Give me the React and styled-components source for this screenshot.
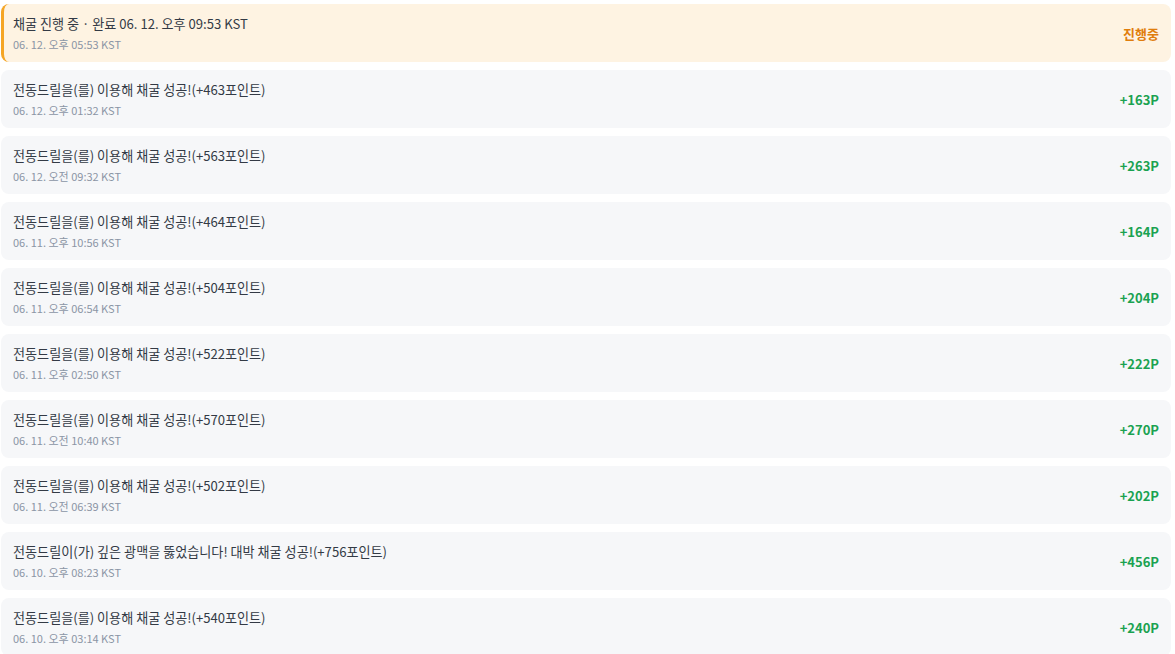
import React from "react";
import styled, { createGlobalStyle } from "styled-components";

const GlobalStyle = createGlobalStyle`
  html, body {
    margin: 0;
    padding: 0;
    background: #ffffff;
    font-family: "Noto Sans CJK KR", "Noto Sans", sans-serif;
  }
`;

const List = styled.div`
  display: flex;
  flex-direction: column;
  gap: 8px;
  padding: 4px 4px 0 1px;
`;

const Item = styled.div`
  display: flex;
  align-items: center;
  justify-content: space-between;
  height: 58px;
  box-sizing: border-box;
  padding: 0 12px 0 ${(p) => (p.$active ? "9px" : "12px")};
  border-radius: 8px;
  background: ${(p) => (p.$active ? "#fef3e2" : "#f6f7f9")};
  border-left: ${(p) => (p.$active ? "3px solid #f5a524" : "none")};
`;

const Info = styled.div`
  display: flex;
  flex-direction: column;
  gap: 4px;
`;

const Title = styled.div`
  font-size: 13.1px;
  color: #333a45;
  line-height: 18px;
`;

const Time = styled.div`
  font-size: 11px;
  color: #8b95a5;
  line-height: 14px;
`;

const Amount = styled.div`
  font-size: 13px;
  font-weight: 700;
  color: ${(p) => (p.$pending ? "#e07d0c" : "#1aa251")};
`;

const logs = [
  ["463", "06. 12. 오후 01:32 KST", "+163P"],
  ["563", "06. 12. 오전 09:32 KST", "+263P"],
  ["464", "06. 11. 오후 10:56 KST", "+164P"],
  ["504", "06. 11. 오후 06:54 KST", "+204P"],
  ["522", "06. 11. 오후 02:50 KST", "+222P"],
  ["570", "06. 11. 오전 10:40 KST", "+270P"],
  ["502", "06. 11. 오전 06:39 KST", "+202P"],
  ["756", "06. 10. 오후 08:23 KST", "+456P", true],
  ["540", "06. 10. 오후 03:14 KST", "+240P"],
];

export default function App() {
  return (
    <>
      <GlobalStyle />
      <List>
        <Item $active>
          <Info>
            <Title>채굴 진행 중 · 완료 06. 12. 오후 09:53 KST</Title>
            <Time>06. 12. 오후 05:53 KST</Time>
          </Info>
          <Amount $pending>진행중</Amount>
        </Item>
        {logs.map(([pts, time, gain, jackpot]) => (
          <Item key={time}>
            <Info>
              <Title>
                {jackpot
                  ? `전동드릴이(가) 깊은 광맥을 뚫었습니다! 대박 채굴 성공!(+${pts}포인트)`
                  : `전동드릴을(를) 이용해 채굴 성공!(+${pts}포인트)`}
              </Title>
              <Time>{time}</Time>
            </Info>
            <Amount>{gain}</Amount>
          </Item>
        ))}
      </List>
    </>
  );
}
